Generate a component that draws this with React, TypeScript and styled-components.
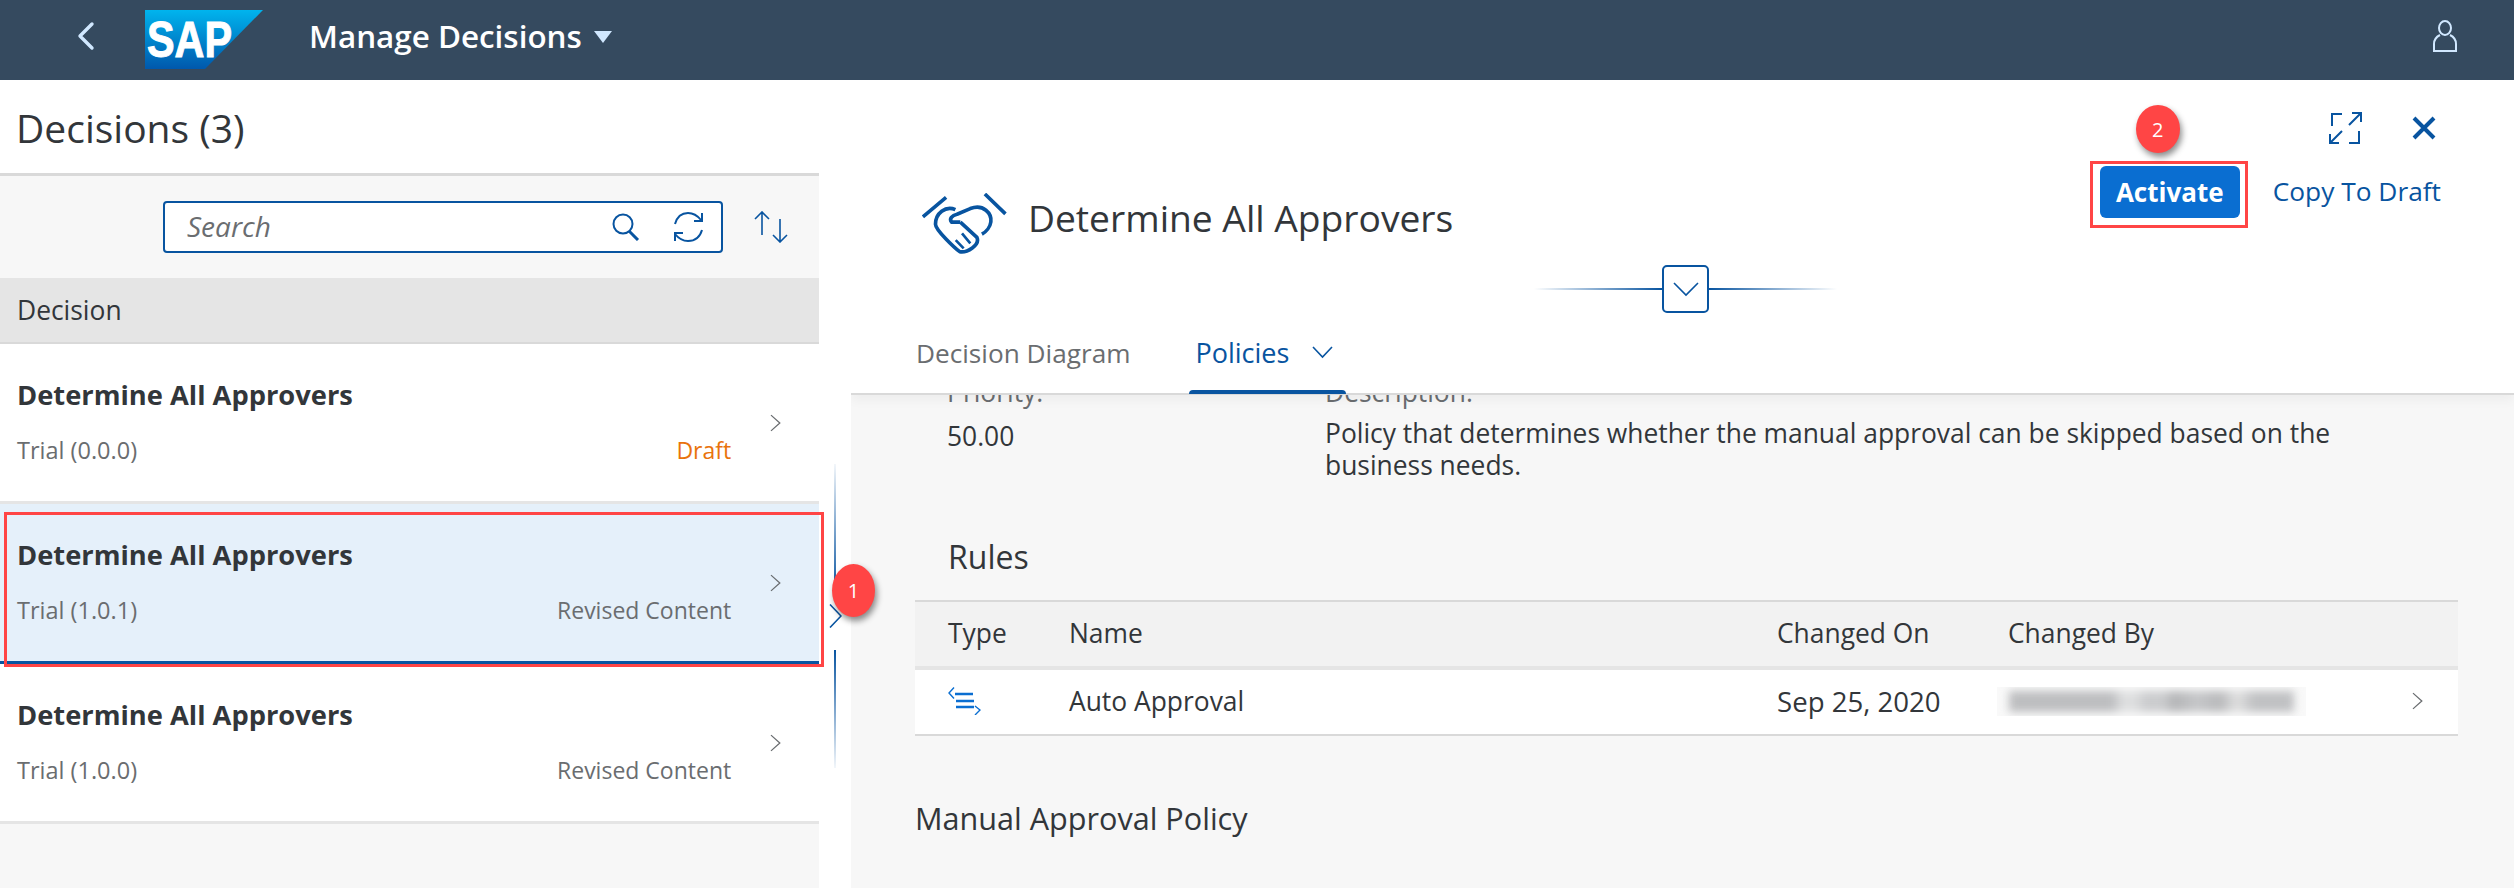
import styled, { createGlobalStyle } from "styled-components";

const BLUE = "#0854a0";
const TEXT = "#32363a";
const MUTED = "#6a6d70";
const RED = "#ff4545";

const GlobalStyle = createGlobalStyle`
  html, body {
    margin: 0;
    padding: 0;
    background: #f7f7f7;
  }
  body {
    font-family: "Open Sans", "Liberation Sans", sans-serif;
    color: ${TEXT};
  }
  * {
    box-sizing: border-box;
  }
`;

const decisions = [
  { version: "Trial (0.0.0)", status: "Draft", selected: false },
  { version: "Trial (1.0.1)", status: "Revised Content", selected: true },
  { version: "Trial (1.0.0)", status: "Revised Content", selected: false },
];

function Chevron({ size = 18 }: { size?: number }) {
  return (
    <svg width={size * 0.6} height={size} viewBox="0 0 11 18" fill="none">
      <path d="M1 1l9 8-9 8" stroke={MUTED} strokeWidth="1.3" />
    </svg>
  );
}

export default function App() {
  return (
    <Page>
      <GlobalStyle />
      <TopBar>
        <BackIcon width="18" height="30" viewBox="0 0 18 30" fill="none">
          <path d="M15 3L3 15l12 12" stroke="#d1e8ff" strokeWidth="3.4" strokeLinecap="round" strokeLinejoin="round" />
        </BackIcon>
        <Logo width="118" height="59" viewBox="0 0 118 59">
          <defs>
            <linearGradient id="sapFill" x1="0" y1="0" x2="0" y2="1">
              <stop offset="0" stopColor="#00b4ee" />
              <stop offset="1" stopColor="#0058ac" />
            </linearGradient>
          </defs>
          <polygon points="0,0 118,0 60,59 0,59" fill="url(#sapFill)" />
          <text
            x="2"
            y="47"
            fontFamily="Liberation Sans"
            fontWeight="700"
            fontSize="50"
            fill="#fff"
            stroke="#fff"
            strokeWidth="1"
            textLength="85"
            lengthAdjust="spacingAndGlyphs"
          >
            SAP
          </text>
        </Logo>
        <AppTitle>Manage Decisions</AppTitle>
        <Caret />
        <UserIcon width="26" height="32" viewBox="0 0 26 32" fill="none">
          <ellipse cx="13" cy="8" rx="6" ry="7" stroke="#d1e8ff" strokeWidth="2" />
          <path d="M8 15c-4 2-6 5-6 9v7h22v-7c0-4-2-7-6-9" stroke="#d1e8ff" strokeWidth="2" />
        </UserIcon>
      </TopBar>

      <Body>
        <LeftPane>
          <PaneTitle>
            <h1>Decisions (3)</h1>
          </PaneTitle>
          <Toolbar>
            <SearchBox>
              <SearchHint>Search</SearchHint>
              <svg width="28" height="28" viewBox="0 0 28 28" fill="none">
                <circle cx="11" cy="11" r="9.5" stroke={BLUE} strokeWidth="2" />
                <path d="M17 18l9 9" stroke={BLUE} strokeWidth="3" />
              </svg>
              <svg width="33" height="32" viewBox="0 0 33 32" fill="none">
                <path d="M3 13C5 6 10 2 16 2c5 0 9 2 13 7" stroke={BLUE} strokeWidth="2" />
                <path d="M30 2v8h-8" stroke={BLUE} strokeWidth="2" />
                <path d="M30 19c-2 7-7 11-14 11-5 0-9-2-13-7" stroke={BLUE} strokeWidth="2" />
                <path d="M3 30v-8h8" stroke={BLUE} strokeWidth="2" />
              </svg>
            </SearchBox>
            <svg width="34" height="32" viewBox="0 0 34 32" fill="none">
              <path d="M8 24V1M1 8l7-7 7 7" stroke={BLUE} strokeWidth="1.6" />
              <path d="M26 8v23M19 24l7 7 7-7" stroke={BLUE} strokeWidth="1.6" />
            </svg>
          </Toolbar>
          <ColumnHeader>Decision</ColumnHeader>
          {decisions.map((d) => (
            <DecisionRow key={d.version} $selected={d.selected}>
              <RowText>
                <RowTitle>Determine All Approvers</RowTitle>
                <RowMeta>
                  <span>{d.version}</span>
                  <RowStatus $draft={d.status === "Draft"}>{d.status}</RowStatus>
                </RowMeta>
              </RowText>
              <Chevron />
              {d.selected && <RowHighlight />}
            </DecisionRow>
          ))}
        </LeftPane>

        <Splitter>
          <SplitLine $fade="up" $height={130} />
          <svg width="13" height="24" viewBox="0 0 13 24" fill="none">
            <path d="M1 0.5l11 11.500-11 11.500" stroke={BLUE} strokeWidth="1.6" />
          </svg>
          <SplitLine $fade="down" $height={118} />
          <StepOne>1</StepOne>
        </Splitter>

        <RightPane>
          <ObjectHeader>
            <IconBar>
              <svg width="33" height="32" viewBox="0 0 33 32" fill="none">
                <path d="M13 2H3v12M20 31h10V19" stroke={BLUE} strokeWidth="2" />
                <path d="M20 13L32 1M23 1h9v9M13 19L1 31M1 22v9h9" stroke={BLUE} strokeWidth="2" />
              </svg>
              <svg width="24" height="24" viewBox="0 0 24 24" fill="none">
                <path d="M2 2l20 20M22 2L2 22" stroke={BLUE} strokeWidth="4" />
              </svg>
            </IconBar>
            <TitleRow>
              <TitleGroup>
                <svg width="85" height="61" viewBox="125 128 255 184" fill="none">
                  <g stroke={BLUE} strokeWidth="11" strokeLinecap="butt" strokeLinejoin="round">
                    <path d="M127 200l70-59M314 131l62 60" />
                    <path d="M225 178c-30-13-60 12-60 44 0 18 60 73 73 83 22 4 62-20 52-43l-50-46" />
                    <path d="M240 216h-26c-9-10 1-21 16-24l40-17c40-15 65 15 62 40-2 15-14 30-27 37" />
                    <path d="M226 270l24 25M245 250l25 30" strokeWidth="8" />
                  </g>
                </svg>
                <ObjectTitle>Determine All Approvers</ObjectTitle>
              </TitleGroup>
              <Actions>
                <ActivateButton>
                  Activate
                  <StepTwo>2</StepTwo>
                  <ButtonHighlight />
                </ActivateButton>
                <LinkButton>Copy To Draft</LinkButton>
              </Actions>
            </TitleRow>
            <CollapseRow>
              <FadeLine $side="left" />
              <CollapseButton>
                <svg width="26" height="15" viewBox="0 0 26 15" fill="none">
                  <path d="M1 1l12 12L25 1" stroke={BLUE} strokeWidth="1.6" />
                </svg>
              </CollapseButton>
              <FadeLine $side="right" />
            </CollapseRow>
            <TabBar>
              <Tab>Decision Diagram</Tab>
              <Tab $active>
                Policies
                <svg width="21" height="13" viewBox="0 0 21 13" fill="none">
                  <path d="M1 1l9.500 10L20 1" stroke={BLUE} strokeWidth="1.6" />
                </svg>
              </Tab>
            </TabBar>
          </ObjectHeader>

          <Content>
            <Details>
              <Field $gap={12}>
                <FieldLabel>Priority:</FieldLabel>
                <span>50.00</span>
              </Field>
              <Field $gap={9}>
                <FieldLabel>Description:</FieldLabel>
                <span>
                  Policy that determines whether the manual approval can be skipped based on the business needs.
                </span>
              </Field>
            </Details>
            <SectionTitle>Rules</SectionTitle>
            <RulesTable>
              <HeadRow>
                <span>Type</span>
                <span>Name</span>
                <span>Changed On</span>
                <span>Changed By</span>
              </HeadRow>
              <BodyRow>
                <svg width="33" height="28" viewBox="0 0 33 28" fill="none">
                  <path d="M6 0.500L1 6l5 5.500M27 19l5 4-5 5" stroke="#0a6ed1" strokeWidth="1.4" />
                  <path d="M7 7h18M8 14h18M8 20h18" stroke="#0a6ed1" strokeWidth="2.6" />
                </svg>
                <span>Auto Approval</span>
                <DateCell>Sep 25, 2020</DateCell>
                <Smudge>
                  <SmudgeInk />
                </Smudge>
                <RowEnd>
                  <Chevron />
                </RowEnd>
              </BodyRow>
            </RulesTable>
            <PolicyTitle>Manual Approval Policy</PolicyTitle>
          </Content>
        </RightPane>
      </Body>
    </Page>
  );
}

const Page = styled.div`
  width: 2514px;
  height: 888px;
  display: flex;
  flex-direction: column;
  overflow: hidden;
`;

const TopBar = styled.header`
  height: 80px;
  flex: none;
  background: #354a5f;
  display: flex;
  align-items: center;
`;

const BackIcon = styled.svg`
  margin: -8px 0 0 77px;
`;

const Logo = styled.svg`
  margin: 0 0 2px 50px;
`;

const AppTitle = styled.div`
  margin: -10px 0 0 46px;
  font-size: 31.4px;
  font-weight: 600;
  color: #fff;
  white-space: nowrap;
`;

const Caret = styled.div`
  margin: -7px 0 0 12px;
  width: 0;
  height: 0;
  border-left: 9px solid transparent;
  border-right: 9px solid transparent;
  border-top: 12px solid #d1e8ff;
`;

const UserIcon = styled.svg`
  margin: -8px 56px 0 auto;
`;

const Body = styled.main`
  flex: 1;
  display: flex;
  min-height: 0;
`;

const LeftPane = styled.section`
  width: 819px;
  flex: none;
  display: flex;
  flex-direction: column;
`;

const PaneTitle = styled.div`
  height: 96px;
  flex: none;
  background: #fff;
  border-bottom: 3px solid #d9d9d9;
  padding: 28px 0 0 16px;

  h1 {
    margin: 0;
    font-size: 39px;
    font-weight: 400;
    line-height: 40px;
  }
`;

const Toolbar = styled.div`
  height: 102px;
  flex: none;
  display: flex;
  align-items: center;
  justify-content: flex-end;
  gap: 31px;
  padding: 0 31px 0 0;
`;

const SearchBox = styled.div`
  width: 560px;
  height: 52px;
  background: #fff;
  border: 2px solid ${BLUE};
  border-radius: 4px;
  display: flex;
  align-items: center;
  gap: 32px;
  padding: 0 16px 0 22px;
`;

const SearchHint = styled.span`
  flex: 1;
  margin-top: -2px;
  font-size: 28px;
  font-style: italic;
  color: ${MUTED};
`;

const ColumnHeader = styled.div`
  height: 66px;
  flex: none;
  background: #e5e5e5;
  border-bottom: 2px solid #d9d9d9;
  display: flex;
  align-items: center;
  padding-left: 17px;
  font-size: 26.4px;
`;

const DecisionRow = styled.div<{ $selected: boolean }>`
  position: relative;
  height: 160px;
  flex: none;
  background: ${(p) => (p.$selected ? "#e5f0fa" : "#fff")};
  border-bottom: 3px solid ${(p) => (p.$selected ? BLUE : "#e5e5e5")};
  display: flex;
  align-items: center;
  gap: 39px;
  padding: 0 38px 0 17px;
`;

const RowText = styled.div`
  flex: 1;
  display: flex;
  flex-direction: column;
  gap: 21px;
`;

const RowTitle = styled.div`
  font-size: 27.3px;
  font-weight: 700;
  line-height: 34px;
`;

const RowMeta = styled.div`
  display: flex;
  justify-content: space-between;
  font-size: 23.5px;
  line-height: 34px;
  color: ${MUTED};
`;

const RowStatus = styled.span<{ $draft: boolean }>`
  font-size: 23px;
  color: ${(p) => (p.$draft ? "#e9730c" : MUTED)};
`;

const RowHighlight = styled.div`
  position: absolute;
  z-index: 2;
  top: 8px;
  left: 4px;
  right: -5px;
  bottom: -6px;
  border: 3px solid ${RED};
  pointer-events: none;
`;

const Splitter = styled.div`
  position: relative;
  width: 32px;
  flex: none;
  background: #fff;
  display: flex;
  flex-direction: column;
  align-items: center;
  padding-top: 384px;
`;

const SplitLine = styled.div<{ $fade: "up" | "down"; $height: number }>`
  width: 2px;
  margin: ${(p) => (p.$fade === "up" ? "0 0 10px" : "22px 0 0")};
  height: ${(p) => p.$height}px;
  background: linear-gradient(
    ${(p) => (p.$fade === "up" ? "to top" : "to bottom")},
    ${BLUE},
    rgba(8, 84, 160, 0.05)
  );
`;

const Badge = styled.div`
  position: absolute;
  border-radius: 50%;
  background: ${RED};
  color: #fff;
  display: flex;
  align-items: center;
  justify-content: center;
  font-size: 20px;
  font-weight: 400;
  box-shadow: 2px 4px 6px rgba(0, 0, 0, 0.45);
  z-index: 3;
`;

const StepOne = styled(Badge)`
  left: 13px;
  top: 484px;
  width: 43px;
  height: 53px;
`;

const StepTwo = styled(Badge)`
  left: 36px;
  top: -61px;
  width: 44px;
  height: 48px;
`;

const RightPane = styled.section`
  flex: 1;
  display: flex;
  flex-direction: column;
  min-width: 0;
  overflow: hidden;
`;

const ObjectHeader = styled.div`
  position: relative;
  z-index: 2;
  height: 315px;
  flex: none;
  background: #fff;
  border-bottom: 2px solid #d9d9d9;
  padding-top: 32px;
  box-shadow: 0 6px 10px rgba(0, 0, 0, 0.04);
`;

const IconBar = styled.div`
  height: 32px;
  display: flex;
  align-items: center;
  justify-content: flex-end;
  gap: 50px;
  padding-right: 78px;
`;

const TitleRow = styled.div`
  height: 88px;
  margin-top: 22px;
  display: flex;
  justify-content: space-between;
  padding: 0 73px 0 71px;
`;

const TitleGroup = styled.div`
  display: flex;
  align-items: flex-end;
  gap: 21px;
`;

const ObjectTitle = styled.div`
  font-size: 37.2px;
  line-height: 50px;
  margin-bottom: 11px;
`;

const Actions = styled.div`
  display: flex;
  align-items: flex-start;
  gap: 33px;
`;

const ActivateButton = styled.button`
  position: relative;
  width: 140px;
  height: 52px;
  border: none;
  border-radius: 6px;
  background: #0a6ed1;
  color: #fff;
  font-family: inherit;
  font-size: 26px;
  font-weight: 700;
`;

const ButtonHighlight = styled.div`
  position: absolute;
  top: -5px;
  left: -10px;
  right: -8px;
  bottom: -10px;
  border: 3px solid ${RED};
  pointer-events: none;
`;

const LinkButton = styled.div`
  height: 50px;
  display: flex;
  align-items: center;
  font-size: 26.3px;
  color: ${BLUE};
`;

const CollapseRow = styled.div`
  height: 48px;
  margin-top: 11px;
  padding-left: 6px;
  display: flex;
  align-items: center;
  justify-content: center;
`;

const FadeLine = styled.div<{ $side: "left" | "right" }>`
  width: 128px;
  height: 2px;
  background: linear-gradient(
    ${(p) => (p.$side === "left" ? "to left" : "to right")},
    ${BLUE},
    rgba(8, 84, 160, 0)
  );
`;

const CollapseButton = styled.div`
  width: 47px;
  height: 48px;
  border: 2px solid ${BLUE};
  border-radius: 5px;
  background: #fff;
  display: flex;
  align-items: center;
  justify-content: center;
`;

const TabBar = styled.div`
  height: 80px;
  display: flex;
  gap: 59px;
  padding-left: 65px;
`;

const Tab = styled.div<{ $active?: boolean }>`
  position: relative;
  display: flex;
  align-items: center;
  gap: 23px;
  margin-top: -1px;
  padding: ${(p) => (p.$active ? "0 13px 0 6px" : "0")};
  font-size: ${(p) => (p.$active ? "27px" : "26.2px")};
  color: ${(p) => (p.$active ? BLUE : MUTED)};

  &::after {
    content: "";
    display: ${(p) => (p.$active ? "block" : "none")};
    position: absolute;
    left: 0;
    right: 0;
    bottom: -1px;
    height: 4px;
    border-radius: 4px 4px 0 0;
    background: ${BLUE};
  }
`;

const Content = styled.div`
  flex: 1;
  padding: 0 56px 0 64px;
  font-size: 26.4px;
  line-height: 32px;
`;

const Details = styled.div`
  display: grid;
  grid-template-columns: 378px 1040px;
  margin: -19px 0 0 32px;
`;

const Field = styled.div<{ $gap: number }>`
  display: flex;
  flex-direction: column;
  gap: ${(p) => p.$gap}px;
`;

const FieldLabel = styled.span`
  color: ${MUTED};
`;

const SectionTitle = styled.h2`
  margin: 56px 0 0 33px;
  font-size: 32px;
  font-weight: 400;
  line-height: 40px;
`;

const RulesTable = styled.div`
  margin-top: 23px;
`;

const HeadRow = styled.div`
  height: 70px;
  background: #f2f2f2;
  border-top: 2px solid #d9d9d9;
  border-bottom: 4px solid #e5e5e5;
  display: grid;
  grid-template-columns: 121px 708px 231px 1fr;
  align-items: center;
  padding: 0 0 2px 33px;
`;

const BodyRow = styled.div`
  height: 66px;
  background: #fff;
  border-bottom: 2px solid #d9d9d9;
  display: grid;
  grid-template-columns: 121px 708px 220px 309px 1fr;
  align-items: center;
  padding: 0 0 2px 33px;
`;

const DateCell = styled.span`
  font-size: 27.6px;
  white-space: nowrap;
`;

const Smudge = styled.div`
  height: 29px;
  background: #f9f9f9;
  overflow: hidden;
  padding: 4px 12px;
`;

const SmudgeInk = styled.div`
  height: 21px;
  background: linear-gradient(
    90deg,
    #bdbec0 0 36%,
    #dedfe0 40% 44%,
    #cbccce 48% 54%,
    #b4b5b7 58%,
    #c6c7c9 66%,
    #b8b9bb 74%,
    #e0e0e0 80%,
    #c0c1c3 86% 100%
  );
  filter: blur(4px);
`;

const RowEnd = styled.div`
  display: flex;
  justify-content: flex-end;
  padding-right: 35px;
`;

const PolicyTitle = styled.div`
  margin-top: 64px;
  font-size: 30.6px;
  line-height: 36px;
`;
